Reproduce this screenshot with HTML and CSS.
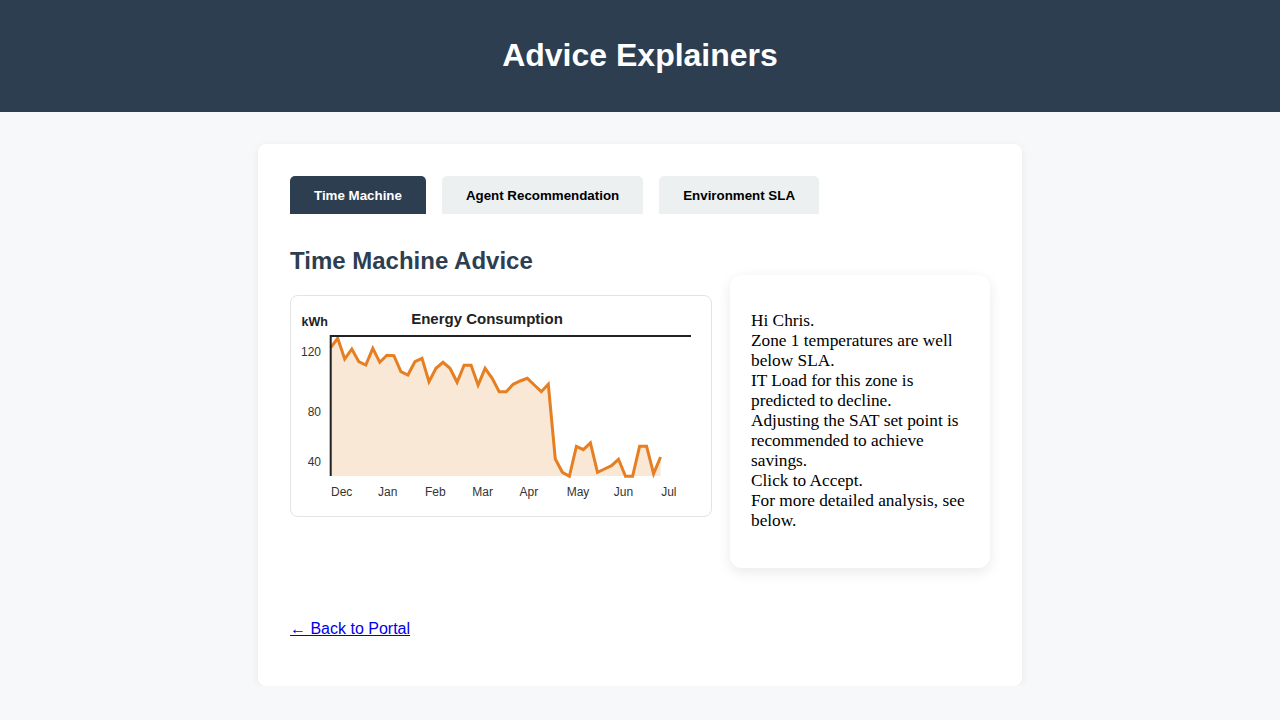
FILE: index.html
```html
<!DOCTYPE html>
<html lang="en">
<head>
<meta charset="utf-8">
<title>Advice Explainers</title>
<link rel="stylesheet" href="styles.css">
</head>
<body>
<header class="site-header">
  <h1 class="site-title">Advice Explainers</h1>
</header>
<main class="card">
  <nav class="tabs">
    <button class="tab tab-active">Time Machine</button>
    <button class="tab">Agent Recommendation</button>
    <button class="tab">Environment SLA</button>
  </nav>
  <h2 class="section-title">Time Machine Advice</h2>
  <div class="advice-row">
    <div class="chart-box">
      <svg class="chart" width="420" height="220" viewBox="0 0 420 220">
        <text class="chart-unit" x="10.5" y="30">kWh</text>
        <text class="chart-title" x="196" y="28" text-anchor="middle">Energy Consumption</text>
        <polygon class="chart-area" points="39.7,180 39.7,51.7 46.7,42.3 53.7,63 60.8,53 67.8,65.7 74.8,69 81.8,52.3 88.8,66.3 95.9,59.3 102.9,59.7 109.9,75.7 116.9,79 123.9,65.7 131,62.3 138,85.7 145,72.3 152,66.3 159,72.3 166.1,86.3 173.1,69.3 180.1,69.3 187.1,89 194.1,72.3 201.2,82.3 208.2,95.7 215.2,95.7 222.2,88.3 229.2,85 236.3,82.3 243.3,89 250.3,95.7 257.3,88.3 264.3,163 271.4,176.3 278.4,180.3 285.4,150.3 292.4,153.7 299.4,147 306.5,176.3 313.5,173 320.5,169.7 327.5,163.3 334.5,180.3 341.6,180.3 348.6,150.3 355.6,150.3 362.6,177.7 369.6,161 369.6,180"/>
        <polyline class="chart-line" points="39.7,51.7 46.7,42.3 53.7,63 60.8,53 67.8,65.7 74.8,69 81.8,52.3 88.8,66.3 95.9,59.3 102.9,59.7 109.9,75.7 116.9,79 123.9,65.7 131,62.3 138,85.7 145,72.3 152,66.3 159,72.3 166.1,86.3 173.1,69.3 180.1,69.3 187.1,89 194.1,72.3 201.2,82.3 208.2,95.7 215.2,95.7 222.2,88.3 229.2,85 236.3,82.3 243.3,89 250.3,95.7 257.3,88.3 264.3,163 271.4,176.3 278.4,180.3 285.4,150.3 292.4,153.7 299.4,147 306.5,176.3 313.5,173 320.5,169.7 327.5,163.3 334.5,180.3 341.6,180.3 348.6,150.3 355.6,150.3 362.6,177.7 369.6,161"/>
        <line class="chart-axis" x1="39" y1="40" x2="400" y2="40"/>
        <line class="chart-axis" x1="39.7" y1="39" x2="39.7" y2="180"/>
        <text class="chart-tick" x="30" y="60" text-anchor="end">120</text>
        <text class="chart-tick" x="30" y="120" text-anchor="end">80</text>
        <text class="chart-tick" x="30" y="170" text-anchor="end">40</text>
        <text class="chart-tick" x="50.7" y="200" text-anchor="middle">Dec</text>
        <text class="chart-tick" x="96.8" y="200" text-anchor="middle">Jan</text>
        <text class="chart-tick" x="144.3" y="200" text-anchor="middle">Feb</text>
        <text class="chart-tick" x="191.7" y="200" text-anchor="middle">Mar</text>
        <text class="chart-tick" x="237.8" y="200" text-anchor="middle">Apr</text>
        <text class="chart-tick" x="287" y="200" text-anchor="middle">May</text>
        <text class="chart-tick" x="332.5" y="200" text-anchor="middle">Jun</text>
        <text class="chart-tick" x="377.8" y="200" text-anchor="middle">Jul</text>
      </svg>
    </div>
    <div class="advice-box">
      <p class="advice-text">Hi Chris.<br>Zone 1 temperatures are well below SLA.<br>IT Load for this zone is predicted to decline.<br>Adjusting the SAT set point is recommended to achieve savings.<br>Click to Accept.<br>For more detailed analysis, see below.</p>
    </div>
  </div>
  <p class="back"><a class="back-link" href="#">← Back to Portal</a></p>
</main>
</body>
</html>
```

FILE: styles.css
```css
* { box-sizing: border-box; }

body {
  margin: 0;
  background: #f6f8fa;
  font-family: "Liberation Sans", Arial, sans-serif;
}

.site-header {
  background: #2c3e50;
  height: 112px;
  padding-bottom: 2px;
  display: flex;
  align-items: center;
  justify-content: center;
}

.site-title {
  margin: 0;
  color: #ffffff;
  font-size: 32px;
  font-weight: bold;
  line-height: 37px;
}

.card {
  display: block;
  width: 764px;
  margin: 32px auto 0;
  background: #ffffff;
  border-radius: 8px;
  box-shadow: 0 2px 10px rgba(0, 0, 0, 0.06);
  padding: 32px;
}

.tabs {
  display: flex;
  gap: 16px;
  margin-bottom: 33px;
}

.tab {
  height: 38px;
  padding: 0 24px;
  border: none;
  border-radius: 5px 5px 0 0;
  background: #ecf0f1;
  color: #000000;
  font-family: "Liberation Sans", Arial, sans-serif;
  font-size: 13.33px;
  font-weight: bold;
}

.tab-active {
  background: #2c3e50;
  color: #ffffff;
}

.section-title {
  margin: 0;
  font-size: 24px;
  line-height: 28px;
  font-weight: bold;
  color: #2c3e50;
}

.advice-row {
  display: flex;
  align-items: flex-start;
  gap: 18px;
}

.chart-box {
  width: 422px;
  height: 222px;
  margin-top: 20px;
  border: 1px solid #e3e3e3;
  border-radius: 8px;
}

.chart {
  display: block;
}

.chart-unit {
  font-family: "Liberation Sans", Arial, sans-serif;
  font-size: 12.5px;
  font-weight: bold;
  fill: #222222;
}

.chart-title {
  font-family: "Liberation Sans", Arial, sans-serif;
  font-size: 15px;
  font-weight: bold;
  fill: #222222;
}

.chart-tick {
  font-family: "Liberation Sans", Arial, sans-serif;
  font-size: 12px;
  fill: #333333;
}

.chart-area {
  fill: rgba(230, 126, 34, 0.18);
  stroke: none;
}

.chart-line {
  fill: none;
  stroke: #e67e22;
  stroke-width: 3;
  stroke-linejoin: miter;
}

.chart-axis {
  stroke: #222222;
  stroke-width: 2;
}

.advice-box {
  width: 260px;
  background: #ffffff;
  border-radius: 12px;
  box-shadow: 0 4px 14px rgba(0, 0, 0, 0.09);
  padding: 36px 20px 37px 21px;
}

.advice-text {
  margin: 0;
  font-family: "Liberation Serif", "Times New Roman", serif;
  font-size: 17.3px;
  line-height: 20px;
  color: #000000;
}

.back {
  margin: 52px 0 16px;
  font-size: 16px;
  line-height: 18px;
}

.back-link {
  color: #0000ee;
  text-decoration: underline;
}
```
